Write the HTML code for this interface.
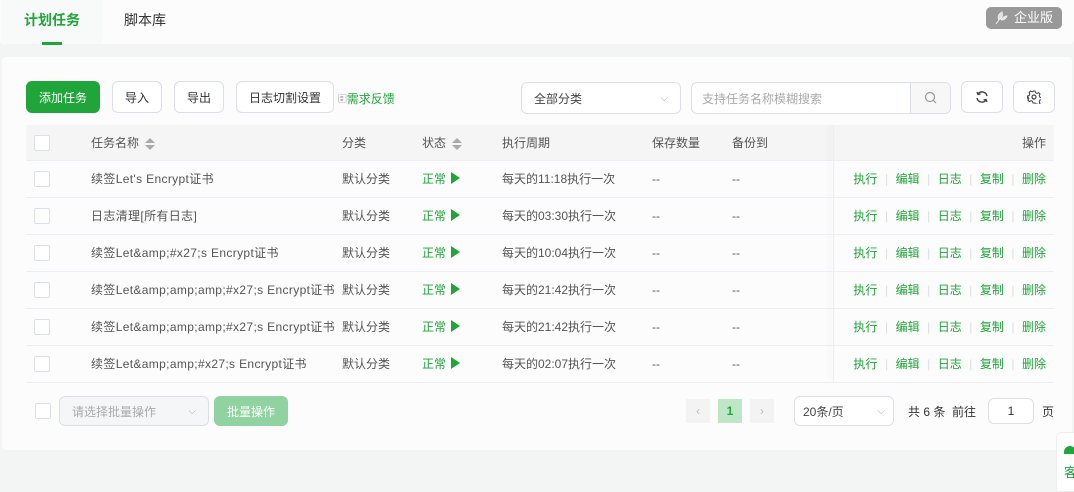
<!DOCTYPE html>
<html><head><meta charset="utf-8"><style>
*{box-sizing:border-box;margin:0;padding:0}
body{width:1074px;height:482px;overflow:hidden;background:#f3f4f4;font-family:"Liberation Sans","Noto Sans CJK SC",sans-serif;font-size:12px;color:#555;position:relative}
.a{position:absolute}
.top{left:0;top:0;width:1074px;height:44px;background:#fcfcfc;border-radius:0 0 4px 4px}
.tabact{left:2px;top:0;width:100px;height:44px;background:#f8f9f9;border-radius:0 0 4px 4px}
.card{left:2px;top:57px;width:1070px;height:393px;background:#fcfcfc;border-radius:4px}
.btn{height:32px;border:1px solid #dcdfe6;border-radius:6px;background:#fff;display:flex;align-items:center;justify-content:center;color:#333;font-size:12px}
.cb{width:16px;height:16px;border:1px solid #dcdfe6;border-radius:2px;background:#fff}
.row{left:26px;width:1028px;height:37px;border-bottom:1px solid #ebeef5}
.c{position:absolute;top:0;line-height:36px;white-space:nowrap;overflow:hidden;color:#555}
.n{letter-spacing:0.35px}
.g{color:#20a53a}
.ops{position:absolute;right:8px;top:0;line-height:36px;color:#20a53a}
.ops i{font-style:normal;color:#ddd;margin:0 7.5px}
.sort{display:inline-block;vertical-align:middle;margin-left:6px;width:10px;height:14px;position:relative}
.sort:before{content:"";position:absolute;left:0;top:1px;border:5px solid transparent;border-top:0;border-bottom:5px solid #aaa}
.sort:after{content:"";position:absolute;left:0;top:8px;border:5px solid transparent;border-bottom:0;border-top:5px solid #aaa}
.play{display:inline-block;width:0;height:0;border-top:6px solid transparent;border-bottom:6px solid transparent;border-left:9px solid #20a53a;margin-left:5px;vertical-align:-1px}
</style></head><body>
<div class="a top"></div>
<div class="a tabact"></div>
<div class="a" style="left:24px;top:10px;font-size:14px;font-weight:bold;color:#20a53a">计划任务</div>
<div class="a" style="left:42px;top:42px;width:20px;height:3px;background:#20a53a"></div>
<div class="a" style="left:124px;top:10px;font-size:14px;color:#333">脚本库</div>
<div class="a" style="left:986px;top:7px;width:76px;height:22px;background:#999;border-radius:5px;color:#fff;font-size:13px;line-height:22px;padding-left:28px">企业版</div>
<svg class="a" style="left:994px;top:11px" width="14" height="14" viewBox="0 0 14 14"><path d="M2 13 L7 6 M5 9 C3 5 5 3 8 1 C9 4 8 7 5 9 M7 9 C9 6 11 5 13 5 C12 8 10 9 7 9" fill="#ddd" stroke="#eee" stroke-width="1"/></svg>
<div class="a card"></div>
<div class="a btn" style="left:26px;top:81px;width:74px;background:#20a53a;border-color:#20a53a;color:#fff">添加任务</div>
<div class="a btn" style="left:112px;top:81px;width:50px">导入</div>
<div class="a btn" style="left:174px;top:81px;width:50px">导出</div>
<div class="a btn" style="left:236px;top:81px;width:98px">日志切割设置</div>
<div class="a" style="left:338px;top:90px;color:#20a53a"><span style="color:#777">🗉</span>需求反馈</div>
<div class="a btn" style="left:521px;top:82px;width:160px;justify-content:space-between;padding:0 12px;color:#444">全部分类<span style="color:#aaa;font-size:10px">⌵</span></div>
<div class="a btn" style="left:691px;top:82px;width:260px;justify-content:flex-start;padding-left:10px;color:#aaa">支持任务名称模糊搜索</div>
<div class="a" style="left:910px;top:83px;width:40px;height:30px;border-left:1px solid #dcdfe6;background:#f7f7f7;border-radius:0 6px 6px 0"></div>
<svg class="a" style="left:924px;top:91px" width="13" height="13" viewBox="0 0 13 13"><circle cx="6" cy="6" r="4.5" fill="none" stroke="#999" stroke-width="1.2"/><path d="M9.5 9.5 L12 12" stroke="#999" stroke-width="1.2"/></svg>
<div class="a btn" style="left:961px;top:81px;width:42px"><svg width="14" height="14" viewBox="0 0 14 14"><path d="M12 6 A5 5 0 0 0 3 4 M2 8 A5 5 0 0 0 11 10" fill="none" stroke="#444" stroke-width="1.4"/><path d="M2 2 L3 4.5 L5.5 4" fill="none" stroke="#444" stroke-width="1.4"/><path d="M12 12 L11 9.5 L8.5 10" fill="none" stroke="#444" stroke-width="1.4"/></svg></div>
<div class="a btn" style="left:1013px;top:81px;width:42px"><svg width="14" height="14" viewBox="0 0 14 14"><circle cx="7" cy="7" r="2" fill="none" stroke="#444" stroke-width="1.2"/><path d="M6 1h2l.5 1.7 1.5.7 1.6-.8 1.4 1.4-.8 1.6.6 1.5 1.7.6v2l-1.7.5-.6 1.5.8 1.6-1.4 1.4-1.6-.8-1.5.6L8 13H6l-.5-1.7-1.5-.6-1.6.8-1.4-1.4.8-1.6-.7-1.5L.5 8V6l1.7-.5.7-1.5-.8-1.6 1.4-1.4 1.6.8 1.5-.7z" fill="none" stroke="#444" stroke-width="1"/></svg></div>

<div class="a row" style="top:125px;height:36px;background:#f5f5f6">
<div class="c" style="left:8px;top:10px"><div class="cb"></div></div>
<div class="c" style="left:65px">任务名称<span class="sort"></span></div>
<div class="c" style="left:316px">分类</div>
<div class="c" style="left:396px">状态<span class="sort"></span></div>
<div class="c" style="left:476px">执行周期</div>
<div class="c" style="left:626px">保存数量</div>
<div class="c" style="left:706px">备份到</div>
<div class="c" style="right:8px">操作</div>
</div>
<div class="a" style="left:833px;top:125px;width:1px;height:257px;box-shadow:-3px 0 6px rgba(0,0,0,.1);background:#eee"></div>

<div class="a row" style="top:161px"><div class="c" style="left:8px;top:10px"><div class="cb"></div></div><div class="c n" style="left:65px;width:248px">续签Let's Encrypt证书</div><div class="c" style="left:316px">默认分类</div><div class="c g" style="left:396px">正常<span class="play"></span></div><div class="c" style="left:476px">每天的11:18执行一次</div><div class="c" style="left:626px">--</div><div class="c" style="left:706px">--</div><div class="ops">执行<i>|</i>编辑<i>|</i>日志<i>|</i>复制<i>|</i>删除</div></div>
<div class="a row" style="top:198px"><div class="c" style="left:8px;top:10px"><div class="cb"></div></div><div class="c n" style="left:65px;width:248px">日志清理[所有日志]</div><div class="c" style="left:316px">默认分类</div><div class="c g" style="left:396px">正常<span class="play"></span></div><div class="c" style="left:476px">每天的03:30执行一次</div><div class="c" style="left:626px">--</div><div class="c" style="left:706px">--</div><div class="ops">执行<i>|</i>编辑<i>|</i>日志<i>|</i>复制<i>|</i>删除</div></div>
<div class="a row" style="top:235px"><div class="c" style="left:8px;top:10px"><div class="cb"></div></div><div class="c n" style="left:65px;width:248px">续签Let&amp;amp;#x27;s Encrypt证书</div><div class="c" style="left:316px">默认分类</div><div class="c g" style="left:396px">正常<span class="play"></span></div><div class="c" style="left:476px">每天的10:04执行一次</div><div class="c" style="left:626px">--</div><div class="c" style="left:706px">--</div><div class="ops">执行<i>|</i>编辑<i>|</i>日志<i>|</i>复制<i>|</i>删除</div></div>
<div class="a row" style="top:272px"><div class="c" style="left:8px;top:10px"><div class="cb"></div></div><div class="c n" style="left:65px;width:248px">续签Let&amp;amp;amp;amp;#x27;s Encrypt证书</div><div class="c" style="left:316px">默认分类</div><div class="c g" style="left:396px">正常<span class="play"></span></div><div class="c" style="left:476px">每天的21:42执行一次</div><div class="c" style="left:626px">--</div><div class="c" style="left:706px">--</div><div class="ops">执行<i>|</i>编辑<i>|</i>日志<i>|</i>复制<i>|</i>删除</div></div>
<div class="a row" style="top:309px"><div class="c" style="left:8px;top:10px"><div class="cb"></div></div><div class="c n" style="left:65px;width:248px">续签Let&amp;amp;amp;amp;#x27;s Encrypt证书</div><div class="c" style="left:316px">默认分类</div><div class="c g" style="left:396px">正常<span class="play"></span></div><div class="c" style="left:476px">每天的21:42执行一次</div><div class="c" style="left:626px">--</div><div class="c" style="left:706px">--</div><div class="ops">执行<i>|</i>编辑<i>|</i>日志<i>|</i>复制<i>|</i>删除</div></div>
<div class="a row" style="top:346px"><div class="c" style="left:8px;top:10px"><div class="cb"></div></div><div class="c n" style="left:65px;width:248px">续签Let&amp;amp;amp;#x27;s Encrypt证书</div><div class="c" style="left:316px">默认分类</div><div class="c g" style="left:396px">正常<span class="play"></span></div><div class="c" style="left:476px">每天的02:07执行一次</div><div class="c" style="left:626px">--</div><div class="c" style="left:706px">--</div><div class="ops">执行<i>|</i>编辑<i>|</i>日志<i>|</i>复制<i>|</i>删除</div></div>

<div class="a cb" style="left:35px;top:403px"></div>
<div class="a btn" style="left:59px;top:396px;width:150px;height:30px;background:#f5f6f7;color:#aaa;justify-content:space-between;padding:0 12px">请选择批量操作<span style="font-size:10px">⌵</span></div>
<div class="a btn" style="left:214px;top:396px;width:74px;height:30px;background:#90d3a0;border-color:#90d3a0;color:#fff">批量操作</div>
<div class="a" style="left:686px;top:399px;width:24px;height:24px;background:#f3f3f3;color:#bbb;text-align:center;line-height:24px">‹</div>
<div class="a" style="left:718px;top:399px;width:24px;height:24px;background:#bfe6c7;color:#20a53a;text-align:center;line-height:24px;font-weight:bold">1</div>
<div class="a" style="left:750px;top:399px;width:24px;height:24px;background:#f3f3f3;color:#bbb;text-align:center;line-height:24px">›</div>
<div class="a btn" style="left:794px;top:396px;width:100px;height:30px;justify-content:space-between;padding:0 8px;color:#444">20条/页<span style="color:#aaa;font-size:10px">⌵</span></div>
<div class="a" style="left:908px;top:403px;color:#333">共 6 条&nbsp; 前往</div>
<div class="a btn" style="left:988px;top:398px;width:46px;height:26px;color:#333">1</div>
<div class="a" style="left:1042px;top:403px;color:#333">页</div>
<div class="a" style="left:1056px;top:432px;width:24px;height:60px;background:#fff;border:1px solid #eee;border-radius:6px 0 0 0"></div>
<div class="a" style="left:1064px;top:446px;width:12px;height:8px;border-radius:6px 6px 0 0;background:#20a53a"></div>
<div class="a" style="left:1064px;top:462px;color:#20a53a;font-size:13px">客</div>
</body></html>
